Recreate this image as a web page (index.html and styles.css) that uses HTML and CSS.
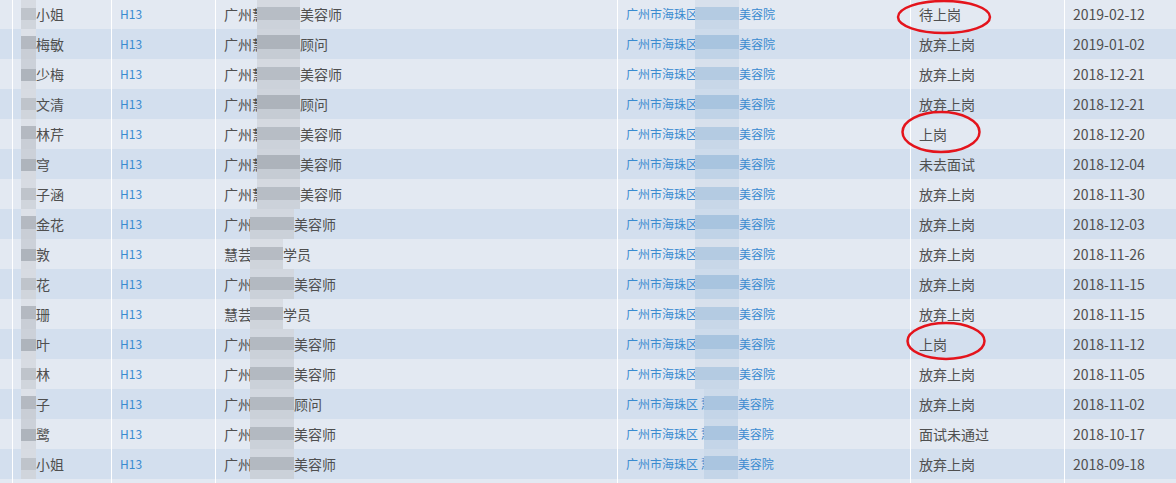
FILE: index.html
```html
<!DOCTYPE html>
<html lang="zh-CN">
<head>
<meta charset="utf-8">
<title>面试记录</title>
<link rel="stylesheet" href="styles.css">
</head>
<body>
<div class="page">
  <div class="grid">
    <div class="row odd"><div class="c"></div><div class="c name"><span class="bl bn1"></span>小姐</div><div class="c code">H13</div><div class="c pos">广州慧<span class="bl bp bp-a"></span>美容师</div><div class="c addr">广州市海珠区<span class="bl ba ba1"></span>美容院</div><div class="c st">待上岗</div><div class="c dt">2019-02-12</div></div>
    <div class="row even"><div class="c"></div><div class="c name"><span class="bl bn2"></span>梅敏</div><div class="c code">H13</div><div class="c pos">广州慧<span class="bl bp bp-b"></span>顾问</div><div class="c addr">广州市海珠区<span class="bl ba ba2"></span>美容院</div><div class="c st">放弃上岗</div><div class="c dt">2019-01-02</div></div>
    <div class="row odd"><div class="c"></div><div class="c name"><span class="bl bn3"></span>少梅</div><div class="c code">H13</div><div class="c pos">广州慧<span class="bl bp bp-a"></span>美容师</div><div class="c addr">广州市海珠区<span class="bl ba ba1"></span>美容院</div><div class="c st">放弃上岗</div><div class="c dt">2018-12-21</div></div>
    <div class="row even"><div class="c"></div><div class="c name"><span class="bl bn1"></span>文清</div><div class="c code">H13</div><div class="c pos">广州慧<span class="bl bp bp-b"></span>顾问</div><div class="c addr">广州市海珠区<span class="bl ba ba2"></span>美容院</div><div class="c st">放弃上岗</div><div class="c dt">2018-12-21</div></div>
    <div class="row odd"><div class="c"></div><div class="c name"><span class="bl bn2"></span>林芹</div><div class="c code">H13</div><div class="c pos">广州慧<span class="bl bp bp-a"></span>美容师</div><div class="c addr">广州市海珠区<span class="bl ba ba1"></span>美容院</div><div class="c st">上岗</div><div class="c dt">2018-12-20</div></div>
    <div class="row even"><div class="c"></div><div class="c name"><span class="bl bn3"></span>穹</div><div class="c code">H13</div><div class="c pos">广州慧<span class="bl bp bp-b"></span>美容师</div><div class="c addr">广州市海珠区<span class="bl ba ba2"></span>美容院</div><div class="c st">未去面试</div><div class="c dt">2018-12-04</div></div>
    <div class="row odd"><div class="c"></div><div class="c name"><span class="bl bn1"></span>子涵</div><div class="c code">H13</div><div class="c pos">广州慧<span class="bl bp bp-a"></span>美容师</div><div class="c addr">广州市海珠区<span class="bl ba ba1"></span>美容院</div><div class="c st">放弃上岗</div><div class="c dt">2018-11-30</div></div>
    <div class="row even"><div class="c"></div><div class="c name"><span class="bl bn2"></span>金花</div><div class="c code">H13</div><div class="c pos">广州<span class="bl bp bp-c"></span>美容师</div><div class="c addr">广州市海珠区<span class="bl ba ba2"></span>美容院</div><div class="c st">放弃上岗</div><div class="c dt">2018-12-03</div></div>
    <div class="row odd"><div class="c"></div><div class="c name"><span class="bl bn3"></span>敦</div><div class="c code">H13</div><div class="c pos">慧芸<span class="bl bp bp-d"></span>学员</div><div class="c addr">广州市海珠区<span class="bl ba ba1"></span>美容院</div><div class="c st">放弃上岗</div><div class="c dt">2018-11-26</div></div>
    <div class="row even"><div class="c"></div><div class="c name"><span class="bl bn1"></span>花</div><div class="c code">H13</div><div class="c pos">广州<span class="bl bp bp-c"></span>美容师</div><div class="c addr">广州市海珠区<span class="bl ba ba2"></span>美容院</div><div class="c st">放弃上岗</div><div class="c dt">2018-11-15</div></div>
    <div class="row odd"><div class="c"></div><div class="c name"><span class="bl bn2"></span>珊</div><div class="c code">H13</div><div class="c pos">慧芸<span class="bl bp bp-d"></span>学员</div><div class="c addr">广州市海珠区<span class="bl ba ba1"></span>美容院</div><div class="c st">放弃上岗</div><div class="c dt">2018-11-15</div></div>
    <div class="row even"><div class="c"></div><div class="c name"><span class="bl bn3"></span>叶</div><div class="c code">H13</div><div class="c pos">广州<span class="bl bp bp-c"></span>美容师</div><div class="c addr">广州市海珠区<span class="bl ba ba2"></span>美容院</div><div class="c st">上岗</div><div class="c dt">2018-11-12</div></div>
    <div class="row odd"><div class="c"></div><div class="c name"><span class="bl bn1"></span>林</div><div class="c code">H13</div><div class="c pos">广州<span class="bl bp bp-c"></span>美容师</div><div class="c addr">广州市海珠区<span class="bl ba ba1"></span>美容院</div><div class="c st">放弃上岗</div><div class="c dt">2018-11-05</div></div>
    <div class="row even"><div class="c"></div><div class="c name"><span class="bl bn2"></span>子</div><div class="c code">H13</div><div class="c pos">广州<span class="bl bp bp-c"></span>顾问</div><div class="c addr">广州市海珠区 慧<span class="bl ba ba3"></span>美容院</div><div class="c st">放弃上岗</div><div class="c dt">2018-11-02</div></div>
    <div class="row odd"><div class="c"></div><div class="c name"><span class="bl bn3"></span>鹭</div><div class="c code">H13</div><div class="c pos">广州<span class="bl bp bp-c"></span>美容师</div><div class="c addr">广州市海珠区 慧<span class="bl ba ba3"></span>美容院</div><div class="c st">面试未通过</div><div class="c dt">2018-10-17</div></div>
    <div class="row even"><div class="c"></div><div class="c name"><span class="bl bn1"></span>小姐</div><div class="c code">H13</div><div class="c pos">广州<span class="bl bp bp-c"></span>美容师</div><div class="c addr">广州市海珠区 慧<span class="bl ba ba3"></span>美容院</div><div class="c st">放弃上岗</div><div class="c dt">2018-09-18</div></div>
    <div class="row odd"><div class="c"></div><div class="c name"></div><div class="c code"></div><div class="c pos"></div><div class="c addr"></div><div class="c st"></div><div class="c dt"></div></div>
  </div>
  <svg class="marks" width="1176" height="483" viewBox="0 0 1176 483" aria-hidden="true">
    <ellipse cx="944" cy="17" rx="46" ry="16" />
    <ellipse cx="941" cy="132" rx="38.5" ry="20" />
    <ellipse cx="946" cy="341" rx="38.5" ry="18" />
  </svg>
</div>
</body>
</html>
```

FILE: styles.css
```css
html, body {
  margin: 0;
  padding: 0;
  background: #ffffff;
}
body {
  width: 1176px;
  height: 483px;
  overflow: hidden;
  font-family: "Noto Sans CJK SC", "Liberation Sans", sans-serif;
}
.page {
  position: relative;
  width: 1176px;
  height: 483px;
  overflow: hidden;
}
.grid {
  margin-top: -1px;
  display: flex;
  flex-direction: column;
}
.row {
  display: grid;
  grid-template-columns: 12px 98px 103px 401px 292px 153px 1fr;
  column-gap: 1px;
  background: #ffffff;
  height: 30px;
}
.row.odd { --bg: #e3e9f2; }
.row.even { --bg: #d3dfee; }
.c {
  background: var(--bg);
  padding: 0 8px;
  height: 30px;
  line-height: 30px;
  white-space: nowrap;
  overflow: hidden;
  font-size: 14px;
  color: #4f4f4f;
}
.row .c:first-child { padding: 0; }
.code, .addr {
  font-size: 12px;
  color: #3a8bd0;
}
.bl {
  display: inline-block;
  vertical-align: top;
  height: 30px;
}
/* name column blur */
.bn1, .bn2, .bn3 { width: 15px; }
.bn1 { background: linear-gradient(#d7dbe2 0 9px, #bfc4cb 9px 21px, #d0d5dc 21px); }
.bn2 { background: linear-gradient(#dde1e8 0 7px, #b4b9c1 7px 20px, #c9ced6 20px); }
.bn3 { background: linear-gradient(#ccd1d9 0 10px, #aeb4bc 10px 22px, #d6dae1 22px); }
/* position column blur */
.bp-a { margin-left: -9px; width: 43px; background: linear-gradient(#d5d9e0 0 8px, #b7bdc5 8px 21px, #ccd2da 21px); }
.bp-b { margin-left: -9px; width: 43px; background: linear-gradient(#cfd4dc 0 6px, #adb3bb 6px 20px, #c6ccd4 20px); }
.bp-c { margin-left: -2px; width: 44px; background: linear-gradient(#d2d7df 0 8px, #b3b9c1 8px 21px, #cbd1d9 21px); }
.bp-d { margin-left: -2px; width: 33px; background: linear-gradient(#d9dde4 0 8px, #b6bbc3 8px 21px, #cfd4db 21px); }
/* address column blur */
.ba1 { margin-left: -3px; width: 44px; background: linear-gradient(#d7e0ec 0 8px, #b4cbe2 8px 21px, #c8d7e8 21px); }
.ba2 { margin-left: -3px; width: 44px; background: linear-gradient(#cddbeb 0 6px, #a8c4df 6px 20px, #c0d3e7 20px); }
.ba3 { margin-left: -9px; width: 34px; background: linear-gradient(#ccdaea 0 7px, #aac5e0 7px 21px, #c4d5e8 21px); }
.marks {
  position: absolute;
  left: 0;
  top: 0;
  pointer-events: none;
}
.marks ellipse {
  fill: none;
  stroke: #e4141c;
  stroke-width: 2.5;
}
```
